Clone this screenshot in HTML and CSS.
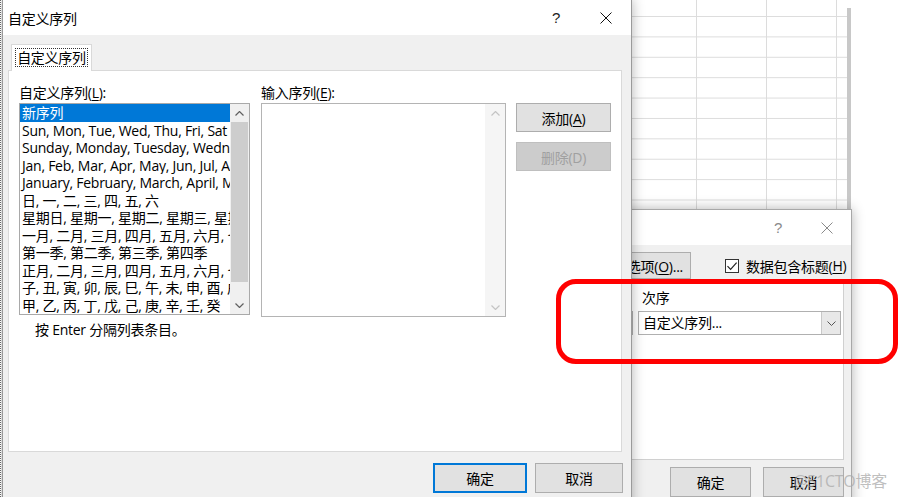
FILE: index.html
```html
<!DOCTYPE html>
<html lang="zh-CN">
<head>
  <meta charset="UTF-8">
  <title>自定义序列</title>
  <link rel="stylesheet" href="styles.css">
</head>
<body>

<div class="desktop">
  <div class="sheet"></div>
  <div class="sheet-frame"></div>

  <!-- dialog behind: sort -->
  <div class="dialog dlg-sort">
    <div class="titlebar inactive">
      <span class="title">排序</span>
      <span class="cap-btn help">?</span>
      <span class="cap-btn close">
        <svg width="12" height="12" viewBox="0 0 12 12"><path d="M0.5 0.5L11.5 11.5M11.5 0.5L0.5 11.5" stroke="#8a8a8a" stroke-width="1"/></svg>
      </span>
    </div>
    <div class="sort-body">
      <div class="sort-toolbar">
        <button class="btn btn-options">选项(<u>O</u>)...</button>
        <label class="check">
          <span class="check-box">
            <svg width="12" height="12" viewBox="0 0 12 12"><path d="M1.5 6.2L4.6 9.3L10.6 2.6" fill="none" stroke="#222" stroke-width="1.2"/></svg>
          </span>
          数据包含标题(<u>H</u>)
        </label>
      </div>
      <div class="sort-panel">
        <div class="sort-cols">
          <div class="sort-col col-prev">
            <div class="col-head">排序依据</div>
            <div class="combo combo-prev"><span class="combo-text">单元格值</span><span class="combo-arrow"></span></div>
          </div>
          <div class="sort-col col-order">
            <div class="col-head">次序</div>
            <div class="combo">
              <span class="combo-text">自定义序列...</span>
              <span class="combo-arrow">
                <svg width="9" height="5" viewBox="0 0 9 5"><polyline points="0.5,0.5 4.5,4.5 8.5,0.5" fill="none" stroke="#555" stroke-width="1"/></svg>
              </span>
            </div>
          </div>
        </div>
      </div>
      <div class="footer sort-footer">
        <button class="btn btn-foot2">确定</button>
        <button class="btn btn-foot2">取消</button>
      </div>
    </div>
  </div>

  <!-- front dialog: custom lists -->
  <div class="dialog dlg-list">
    <div class="titlebar">
      <span class="title">自定义序列</span>
      <span class="cap-btn help">?</span>
      <span class="cap-btn close">
        <svg width="12" height="12" viewBox="0 0 12 12"><path d="M0.5 0.5L11.5 11.5M11.5 0.5L0.5 11.5" stroke="#111" stroke-width="1"/></svg>
      </span>
    </div>
    <div class="list-body">
      <div class="tab"><span>自定义序列</span></div>
      <div class="panel">
        <div class="panel-row">
          <div class="col col-lists">
            <div class="field-label">自定义序列(<u>L</u>):</div>
            <div class="box listbox">
              <div class="list-items">
                <div class="item selected">新序列</div>
                <div class="item">Sun, Mon, Tue, Wed, Thu, Fri, Sat</div>
                <div class="item">Sunday, Monday, Tuesday, Wednesday, Thursday, Friday, Saturday</div>
                <div class="item">Jan, Feb, Mar, Apr, May, Jun, Jul, Aug, Sep, Oct, Nov, Dec</div>
                <div class="item">January, February, March, April, May, June, July</div>
                <div class="item">日, 一, 二, 三, 四, 五, 六</div>
                <div class="item">星期日, 星期一, 星期二, 星期三, 星期四, 星期五, 星期六</div>
                <div class="item">一月, 二月, 三月, 四月, 五月, 六月, 七月, 八月</div>
                <div class="item">第一季, 第二季, 第三季, 第四季</div>
                <div class="item">正月, 二月, 三月, 四月, 五月, 六月, 七月, 八月</div>
                <div class="item">子, 丑, 寅, 卯, 辰, 巳, 午, 未, 申, 酉, 戌, 亥</div>
                <div class="item">甲, 乙, 丙, 丁, 戊, 己, 庚, 辛, 壬, 癸</div>
              </div>
              <div class="vscroll">
                <span class="arrow"><svg width="9" height="5" viewBox="0 0 9 5"><polyline points="0.5,4.5 4.5,0.5 8.5,4.5" fill="none" stroke="#606060" stroke-width="1.2"/></svg></span>
                <span class="thumb"></span>
                <span class="track"></span>
                <span class="arrow"><svg width="9" height="5" viewBox="0 0 9 5"><polyline points="0.5,0.5 4.5,4.5 8.5,0.5" fill="none" stroke="#606060" stroke-width="1.2"/></svg></span>
              </div>
            </div>
            <div class="hint">按 Enter 分隔列表条目。</div>
          </div>

          <div class="col col-entries">
            <div class="field-label">输入序列(<u>E</u>):</div>
            <div class="box entrybox">
              <div class="entry-area"></div>
              <div class="vscroll light">
                <span class="arrow"><svg width="9" height="5" viewBox="0 0 9 5"><polyline points="0.5,4.5 4.5,0.5 8.5,4.5" fill="none" stroke="#c4c4c4" stroke-width="1.2"/></svg></span>
                <span class="track"></span>
                <span class="arrow"><svg width="9" height="5" viewBox="0 0 9 5"><polyline points="0.5,0.5 4.5,4.5 8.5,0.5" fill="none" stroke="#c4c4c4" stroke-width="1.2"/></svg></span>
              </div>
            </div>
          </div>

          <div class="col col-actions">
            <button class="btn btn-side">添加(<u>A</u>)</button>
            <button class="btn btn-side" disabled>删除(D)</button>
          </div>
        </div>
      </div>
      <div class="footer">
        <button class="btn btn-ok">确定</button>
        <button class="btn btn-cancel">取消</button>
      </div>
    </div>
  </div>

  <div class="highlight"></div>
  <div class="watermark">@51CTO博客</div>
</div>

</body>
</html>
```

FILE: styles.css
```css
* {
  box-sizing: border-box;
}

body {
  margin: 0;
  background: #fff;
  font-family: "Open Sans", "Noto Sans CJK SC", sans-serif;
  font-size: 14px;
  letter-spacing: -0.25px;
  color: #000;
}

u {
  text-decoration: underline;
  text-underline-offset: 2px;
}

.desktop {
  position: relative;
  width: 900px;
  height: 497px;
  overflow: hidden;
  border-left: 1px dotted #666;
}

/* excel sheet behind the dialogs */
.sheet {
  position: absolute;
  left: 600px;
  top: 0;
  width: 247px;
  height: 215px;
  background-color: #fff;
  background-image:
    linear-gradient(to right, #dcdcdc 1px, transparent 1px),
    linear-gradient(to bottom, #dcdcdc 1px, transparent 1px);
  background-size: 70px 100%, 100% 20.4px;
  background-position: 25px 0, 0 16px;
}

.sheet-frame {
  position: absolute;
  left: 846px;
  top: 8px;
  width: 4px;
  height: 210px;
  background: #c8c8c8;
}

/* windows */
.dialog {
  position: absolute;
  background: #f0f0f0;
  border: 1px solid #9a9a9a;
  box-shadow: 0 0 12px rgba(0, 0, 0, 0.3);
}

.dlg-list {
  left: 1px;
  top: -1px;
  width: 630px;
  height: 520px;
}

.dlg-sort {
  left: 559px;
  top: 209px;
  width: 292px;
  height: 300px;
  border-color: #a8a8a8;
}

.titlebar {
  display: flex;
  align-items: center;
  height: 35px;
  background: #fff;
  padding-left: 5px;
}

.titlebar .title {
  flex: 1;
}

.cap-btn {
  width: 50px;
  height: 35px;
  display: flex;
  align-items: center;
  justify-content: center;
}

.cap-btn.help {
  font-family: "Liberation Sans", sans-serif;
  font-size: 15px;
  color: #222;
}

.titlebar.inactive .cap-btn.help {
  color: #8a8a8a;
}

.titlebar.inactive .cap-btn.close {
  width: 48px;
}

/* custom list dialog body */
.list-body {
  padding: 9px 7px 0 5px;
}

.tab {
  position: relative;
  z-index: 1;
  display: flex;
  width: 81px;
  height: 27px;
  margin-left: 3px;
  margin-bottom: -1px;
  padding: 3px 3px 4px;
  background: #fff;
  border: 1px solid #d9d9d9;
  border-bottom: none;
}

.tab span {
  flex: 1;
  border: 1px dotted #333;
  line-height: 17px;
  text-align: center;
}

.panel {
  width: 614px;
  height: 382px;
  background: #fff;
  border: 1px solid #d9d9d9;
  padding: 12px 10px 0 10px;
}

.panel-row {
  display: flex;
}

.col-lists {
  width: 231px;
}

.col-entries {
  width: 245px;
  margin-left: 11px;
}

.col-actions {
  width: 95px;
  margin-left: 10px;
  padding-top: 20px;
  display: flex;
  flex-direction: column;
  gap: 10px;
}

.field-label {
  height: 20px;
  line-height: 20px;
}

.box {
  display: flex;
  border: 1px solid #a9a9a9;
  background: #fff;
}

.listbox {
  height: 212px;
}

.entrybox {
  height: 214px;
  border-color: #b4b4b4;
}

.list-items {
  flex: 1;
  overflow: hidden;
}

.item {
  height: 17.5px;
  line-height: 17.5px;
  padding-left: 2px;
  white-space: nowrap;
  overflow: hidden;
}

.item.selected {
  background: #0078d7;
  color: #fff;
}

.entry-area {
  flex: 1;
}

.vscroll {
  width: 19px;
  display: flex;
  flex-direction: column;
  background: #f0f0f0;
}

.vscroll.light {
  width: 20px;
  background: #f5f5f5;
}

.vscroll .arrow {
  height: 18px;
  display: flex;
  align-items: center;
  justify-content: center;
}

.vscroll .thumb {
  height: 160px;
  margin: 0 1px;
  background: #cdcdcd;
}

.vscroll .track {
  flex: 1;
}

.hint {
  margin-top: 5px;
  margin-left: 16px;
  line-height: 20px;
}

.btn {
  font-family: inherit;
  font-size: 14px;
  letter-spacing: inherit;
  color: #000;
  background: #e1e1e1;
  border: 1px solid #adadad;
  padding: 0;
}

.btn-side {
  height: 29px;
}

.btn-side:disabled {
  color: #a0a0a0;
  background: #cccccc;
  border-color: #bfbfbf;
}

.footer {
  display: flex;
  justify-content: flex-end;
  gap: 8px;
  margin-top: 11px;
  padding-right: 1px;
}

.btn-ok {
  width: 94px;
  height: 30px;
  border: 2px solid #0078d7;
}

.btn-cancel {
  width: 88px;
  height: 30px;
}

/* sort dialog body */
.sort-toolbar {
  display: flex;
  align-items: center;
  height: 38px;
  padding-top: 3px;
}

.btn-options {
  width: 100px;
  height: 27px;
  margin-left: 30px;
  text-align: right;
  padding-right: 7px;
}

.check {
  display: flex;
  align-items: center;
  margin-left: 34px;
}

.check-box {
  width: 14px;
  height: 14px;
  margin-right: 7px;
  border: 1px solid #333;
  background: #fff;
  display: flex;
  align-items: center;
  justify-content: center;
}

.sort-panel {
  width: 283px;
  height: 177px;
  background: #fff;
  border: 1px solid #d0d0d0;
  padding: 5px 2px 0 0;
}

.sort-cols {
  display: flex;
  justify-content: flex-end;
  gap: 5px;
}

.col-head {
  height: 18px;
  line-height: 18px;
  padding-left: 4px;
}

.col-order {
  width: 203px;
}

.col-prev {
  width: 70px;
}

.combo {
  display: flex;
  height: 24px;
  margin-top: 4px;
  border: 1px solid #b0b0b0;
  background: #fff;
}

.combo-prev {
  background: #e6e6e6;
}

.combo-text {
  flex: 1;
  padding-left: 4px;
  line-height: 22px;
  white-space: nowrap;
  overflow: hidden;
}

.combo-arrow {
  width: 19px;
  display: flex;
  align-items: center;
  justify-content: center;
  background: #e8e8e8;
  border-left: 1px solid #c8c8c8;
}

.sort-footer {
  gap: 12px;
  margin-top: 7px;
  padding-right: 7px;
}

.btn-foot2 {
  width: 81px;
  height: 30px;
}

/* annotation */
.highlight {
  position: absolute;
  left: 555px;
  top: 279px;
  width: 342px;
  height: 85px;
  border: 5px solid #ff0000;
  border-radius: 20px;
}

.watermark {
  position: absolute;
  left: 792px;
  top: 468px;
  font-size: 16px;
  color: rgba(170, 170, 170, 0.75);
  white-space: nowrap;
}
```
